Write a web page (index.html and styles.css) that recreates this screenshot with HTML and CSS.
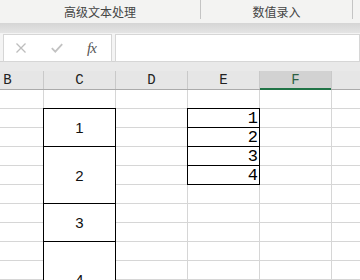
FILE: index.html
```html
<!DOCTYPE html>
<html lang="zh-CN">
<head>
    <meta charset="UTF-8">
    <meta name="viewport" content="width=device-width, initial-scale=1.0">
    <title>工作表</title>
    <link rel="stylesheet" href="styles.css">
</head>
<body>
    <div class="ribbon">
        <div class="group group-text">高级文本处理</div>
        <div class="group group-num">数值录入</div>
    </div>
    <div class="ribbon-edge"></div>

    <div class="formula-bar">
        <div class="name-box">
            <svg class="icon-cancel" width="12" height="10" viewBox="0 0 12 10">
                <path d="M1.5 0.5 L10.5 9.5 M10.5 0.5 L1.5 9.5" stroke="#bdbdbd" stroke-width="1.3" fill="none"/>
            </svg>
            <svg class="icon-ok" width="12" height="10" viewBox="0 0 12 10">
                <path d="M0.8 5.2 L4.3 8.6 L11.2 1.2" stroke="#c2c2c2" stroke-width="1.8" fill="none"/>
            </svg>
            <span class="fx">fx</span>
        </div>
        <div class="input-box"></div>
    </div>

    <div class="sheet">
        <div class="col-strip"></div>
        <div class="col-heads">
            <div class="head">B</div>
            <div class="head">C</div>
            <div class="head">D</div>
            <div class="head">E</div>
            <div class="head selected">F</div>
            <div class="head"></div>
        </div>

        <div class="grid">
            <!-- row 1 -->
            <div class="cell"></div><div class="cell"></div><div class="cell"></div><div class="cell"></div><div class="cell"></div><div class="cell"></div>
            <!-- row 2 -->
            <div class="cell"></div>
            <div class="cell merged span-2 box">1</div>
            <div class="cell"></div>
            <div class="cell num box">1</div>
            <div class="cell"></div><div class="cell"></div>
            <!-- row 3 -->
            <div class="cell"></div><div class="cell"></div>
            <div class="cell num box">2</div>
            <div class="cell"></div><div class="cell"></div>
            <!-- row 4 -->
            <div class="cell"></div>
            <div class="cell merged span-3 box">2</div>
            <div class="cell"></div>
            <div class="cell num box">3</div>
            <div class="cell"></div><div class="cell"></div>
            <!-- row 5 -->
            <div class="cell"></div><div class="cell"></div>
            <div class="cell num box">4</div>
            <div class="cell"></div><div class="cell"></div>
            <!-- row 6 -->
            <div class="cell"></div><div class="cell"></div><div class="cell"></div><div class="cell"></div><div class="cell"></div>
            <!-- row 7 -->
            <div class="cell"></div>
            <div class="cell merged span-2 box">3</div>
            <div class="cell"></div><div class="cell"></div><div class="cell"></div><div class="cell"></div>
            <!-- row 8 -->
            <div class="cell"></div><div class="cell"></div><div class="cell"></div><div class="cell"></div><div class="cell"></div>
            <!-- row 9 -->
            <div class="cell"></div>
            <div class="cell merged span-4 box">4</div>
            <div class="cell"></div><div class="cell"></div><div class="cell"></div><div class="cell"></div>
            <!-- rows 10-12 -->
            <div class="cell"></div><div class="cell"></div><div class="cell"></div><div class="cell"></div><div class="cell"></div>
            <div class="cell"></div><div class="cell"></div><div class="cell"></div><div class="cell"></div><div class="cell"></div>
            <div class="cell"></div><div class="cell"></div><div class="cell"></div><div class="cell"></div><div class="cell"></div>
        </div>
    </div>
</body>
</html>
```

FILE: styles.css
```css
html, body { margin: 0; padding: 0; }
body { width: 360px; height: 280px; overflow: hidden; background: #fff; font-family: "Liberation Sans", "Noto Sans CJK SC", sans-serif; }

/* ribbon */
.ribbon { display: flex; align-items: flex-start; height: 23px; background: #f3f3f2; }
.group { box-sizing: border-box; height: 19px; padding-top: 5px; line-height: 14px; text-align: center; font-size: 12px; color: #444; font-family: "Noto Sans CJK SC", sans-serif; border-right: 1px solid #c4c4c4; }
.group-text { width: 201px; }
.group-num { width: 152px; }
.ribbon-edge { height: 10px; background: linear-gradient(#d5d5d5, #e4e4e4); }

/* formula bar */
.formula-bar { display: flex; gap: 3px; height: 29px; padding: 1px 0 0 3px; box-sizing: border-box; background: #f4f4f4; border-bottom: 1px solid #d3d3d3; }
.name-box, .input-box { box-sizing: border-box; height: 28px; background: #fff; border: 1px solid #d6d6d6; }
.name-box { width: 109px; display: flex; align-items: center; padding-left: 11px; }
.input-box { flex: 1; }
.icon-ok { margin-left: 24px; }
.fx { margin-left: 24px; font-family: "Liberation Serif", serif; font-style: italic; font-size: 15px; color: #555; letter-spacing: -1px; }

/* column headers */
.col-strip { height: 9px; background: #e9e9e9; }
.col-heads { display: grid; grid-template-columns: repeat(6, 71px); gap: 1px; margin-left: -28px; background: #c9c9c9; border-bottom: 1px solid #ababab; }
.head { height: 18px; line-height: 18px; text-align: center; background: #e6e6e6; font-family: "Liberation Mono", monospace; font-size: 14px; color: #222; }
.head.selected { background: #d2d2d2; color: #2b5f44; box-shadow: inset 0 -1px 0 #217346, 0 1px 0 #217346; }

/* cells */
.grid { display: grid; grid-template-columns: repeat(6, 71px); grid-auto-rows: 18px; gap: 1px; margin-left: -28px; background: #d6d6d6; }
.cell { background: #fff; }
.box { box-shadow: 0 0 0 1px #000; }
.merged { display: flex; align-items: center; justify-content: center; font-size: 15px; color: #111; }
.span-2 { grid-row: span 2; }
.span-3 { grid-row: span 3; }
.span-4 { grid-row: span 4; }
.num { text-align: right; padding-right: 1px; font-family: "Liberation Mono", monospace; font-size: 17px; line-height: 19px; color: #000; }
```
